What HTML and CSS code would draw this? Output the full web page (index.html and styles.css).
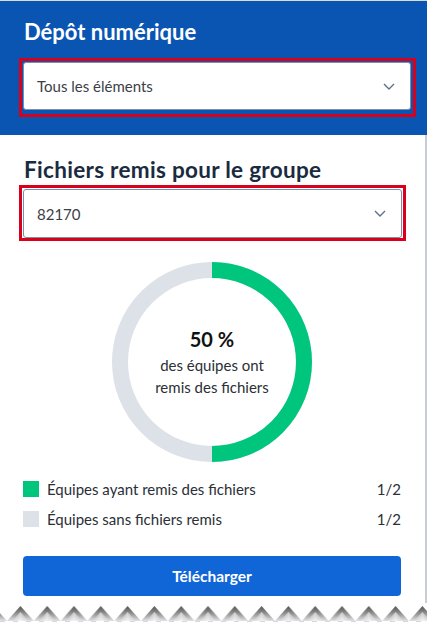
FILE: index.html
```html
<!DOCTYPE html>
<html lang="fr">
<head>
<meta charset="utf-8">
<link rel="stylesheet" href="styles.css">
</head>
<body>
<div class="page">
  <header class="header">
    <h1 class="title">Dépôt numérique</h1>
    <div class="focus focus-header">
      <div class="select">
        <span>Tous les éléments</span>
        <svg class="chev" width="12" height="7" viewBox="0 0 12 7"><path d="M1 1l5 5 5-5" fill="none" stroke="#5f7089" stroke-width="1.4"/></svg>
      </div>
    </div>
  </header>
  <main class="main">
    <h2 class="subtitle">Fichiers remis pour le groupe</h2>
    <div class="focus focus-group">
      <div class="select">
        <span>82170</span>
        <svg class="chev" width="12" height="7" viewBox="0 0 12 7"><path d="M1 1l5 5 5-5" fill="none" stroke="#5f7089" stroke-width="1.4"/></svg>
      </div>
    </div>
    <div class="chart">
      <svg class="donut" width="200" height="200" viewBox="0 0 200 200">
        <circle cx="100" cy="100" r="92" fill="none" stroke="#dde1e8" stroke-width="16"/>
        <path d="M100 8 A92 92 0 0 1 100 192" fill="none" stroke="#00c67d" stroke-width="16"/>
      </svg>
      <div class="center">
        <div class="pct">50 %</div>
        <div class="desc">des équipes ont<br>remis des fichiers</div>
      </div>
    </div>
    <ul class="legend">
      <li class="row"><span class="sw sw-green"></span><span class="lbl">Équipes ayant remis des fichiers</span><span class="val">1/2</span></li>
      <li class="row"><span class="sw sw-gray"></span><span class="lbl">Équipes sans fichiers remis</span><span class="val">1/2</span></li>
    </ul>
    <button class="btn">Télécharger</button>
  </main>
  <svg class="torn" width="427" height="20" viewBox="0 0 427 20">
    <defs>
      <linearGradient id="g" x1="0" y1="0" x2="0" y2="1">
        <stop offset="0" stop-color="#505050"/>
        <stop offset="0.55" stop-color="#999999"/>
        <stop offset="1" stop-color="#e2e2e2"/>
      </linearGradient>
      <linearGradient id="h" x1="0" y1="0" x2="1" y2="0">
        <stop offset="0" stop-color="#ffffff" stop-opacity="0"/>
        <stop offset="0.5" stop-color="#ffffff" stop-opacity="0.6"/>
        <stop offset="1" stop-color="#ffffff" stop-opacity="0"/>
      </linearGradient>
      <pattern id="p" x="7" y="0" width="26.8" height="20" patternUnits="userSpaceOnUse">
        <polygon points="0,18 13.4,3 26.8,18" fill="url(#g)"/>
        <polygon points="5,18 13.4,9 21.8,18" fill="url(#h)"/>
      </pattern>
    </defs>
    <rect x="0" y="0" width="427" height="20" fill="#ffffff"/>
    <rect x="0" y="0" width="427" height="18" fill="url(#p)"/>
    <line x1="0" y1="18.5" x2="427" y2="18.5" stroke="#d4d6ec" stroke-width="1" stroke-dasharray="5 8"/>
  </svg>
</div>
</body>
</html>
```

FILE: styles.css
```css
* { box-sizing: border-box; }
html, body { margin: 0; padding: 0; background: #fff; }
body { font-family: "Lato", "Noto Sans", sans-serif; width: 427px; height: 623px; overflow: hidden; }
.page { position: relative; height: 623px; }
.header {
  background: #0a55b1;
  border-top: 1px solid #d8dde4;
  padding: 17px 11px 18px 19px;
}
.title {
  margin: 0 0 12px 5px;
  color: #fff;
  font-size: 22px;
  font-weight: 700;
  line-height: 28px;
}
.focus {
  border: 3px solid #d9001b;
}
.focus-header { padding: 1px 2px 4px 1px; }
.focus-group { padding: 1px 1px 0 1px; margin: 0 -5px 0 -4px; }
.select {
  height: 48px;
  background: #fff;
  border: 1px solid #7d8ea6;
  border-radius: 3px;
  display: flex;
  align-items: center;
  justify-content: space-between;
  padding: 0 13px 0 13px;
  font-size: 15px;
  color: #3c4047;
}
.focus-group .select { height: 49px; }
.chev { margin-right: 2px; }
.main {
  border-right: 2px solid #c7ccd5;
  padding: 21px 24px 0 23px;
  height: 486px;
}
.subtitle {
  margin: 0 0 1px 1px;
  font-size: 22.5px;
  font-weight: 700;
  line-height: 28px;
  color: #1a2a40;
  letter-spacing: 0.3px;
}
.chart {
  display: grid;
  justify-items: center;
  align-items: center;
  margin-top: 21px;
}
.donut, .center { grid-area: 1 / 1; }
.donut { display: block; }
.center { text-align: center; color: #2b2f36; }
.pct { font-size: 20px; font-weight: 700; color: #111; line-height: 24px; margin-bottom: 3px; }
.desc { font-size: 15px; line-height: 22px; }
.legend { list-style: none; margin: 12px 0 0; padding: 0; }
.row { display: flex; align-items: center; height: 30px; font-size: 15px; color: #2b2f36; }
.sw { width: 16px; height: 16px; margin-right: 8px; }
.sw-green { background: #00c67d; }
.sw-gray { background: #dde1e8; }
.lbl { flex: 1; }
.btn {
  display: block;
  width: 100%;
  margin-top: 22px;
  height: 40px;
  border: none;
  border-radius: 4px;
  background: #1066d6;
  color: #fff;
  font-family: inherit;
  font-size: 15.5px;
  font-weight: 700;
}
.torn { position: absolute; left: 0; bottom: 0; display: block; }
```
